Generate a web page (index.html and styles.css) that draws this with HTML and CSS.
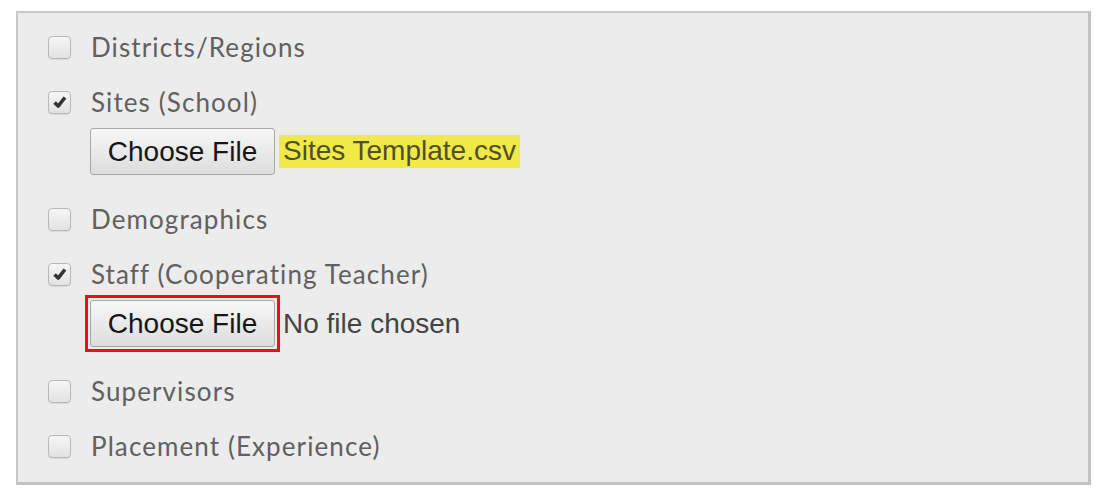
FILE: index.html
```html
<!DOCTYPE html>
<html lang="en">
<head>
  <meta charset="UTF-8">
  <title>Import</title>
  <link rel="stylesheet" href="styles.css">
</head>
<body>
  <div class="panel">
    <div class="item">
      <label class="opcion"><span class="caja"></span>Districts/Regions</label>
    </div>

    <div class="item">
      <label class="opcion"><span class="caja marcada"><svg viewBox="0 0 20 20"><path d="M4 10.5 L8 14.5 L15.5 5" /></svg></span>Sites (School)</label>
      <div class="archivo">
        <span class="boton">Choose File</span>
        <span class="nombre resaltado">Sites Template.csv</span>
      </div>
    </div>

    <div class="item">
      <label class="opcion"><span class="caja"></span>Demographics</label>
    </div>

    <div class="item">
      <label class="opcion"><span class="caja marcada"><svg viewBox="0 0 20 20"><path d="M4 10.5 L8 14.5 L15.5 5" /></svg></span>Staff (Cooperating Teacher)</label>
      <div class="archivo">
        <span class="marco"><span class="boton">Choose File</span></span>
        <span class="nombre">No file chosen</span>
      </div>
    </div>

    <div class="item">
      <label class="opcion"><span class="caja"></span>Supervisors</label>
    </div>

    <div class="item">
      <label class="opcion"><span class="caja"></span>Placement (Experience)</label>
    </div>
  </div>
</body>
</html>
```

FILE: styles.css
```css
body {
  margin: 0;
  background: #ffffff;
  font-family: 'Lato', sans-serif;
}
.panel {
  margin: 11px 0 0 16px;
  width: 1070px;
  height: 437px;
  padding: 14px 0 18px 0;
  background-color: #ececec;
  border: 2px solid #c8c8c8;
  border-right: 3px solid #c2c2c2;
  border-bottom: 3px solid #c2c2c2;
}
.item {
  padding-top: 15px;
}
.item:first-child {
  padding-top: 0;
}
.opcion {
  display: flex;
  align-items: center;
  height: 40px;
  padding-left: 30px;
  font-size: 26px;
  color: #606060;
  letter-spacing: 1.1px;
}
.caja {
  width: 21px;
  height: 21px;
  margin-right: 20px;
  border: 1px solid #b8b8b8;
  border-radius: 4px;
  background: linear-gradient(#f6f6f6, #e2e2e2);
  box-shadow: 0 1px 1px rgba(0,0,0,0.08);
  display: flex;
  align-items: center;
  justify-content: center;
}
.caja svg {
  width: 18px;
  height: 18px;
}
.caja path {
  fill: none;
  stroke: #333333;
  stroke-width: 4;
  stroke-linejoin: round;
}
.archivo {
  display: flex;
  align-items: center;
  padding: 6px 0 9px 72px;
  font-family: 'Liberation Sans', Arial, sans-serif;
  font-size: 28px;
}
.boton {
  display: inline-flex;
  align-items: center;
  justify-content: center;
  box-sizing: border-box;
  width: 185px;
  height: 47px;
  border: 1px solid #a8a8a8;
  border-radius: 3px;
  background: linear-gradient(#f7f7f7, #dddddd);
  color: #161616;
}
.marco {
  display: inline-flex;
  margin: -5px;
  padding: 2px;
  border: 3px solid #ec0f1a;
}
.nombre {
  margin-left: 8px;
  color: #444;
}
.resaltado {
  margin-left: 4px;
  padding: 0 4px 1px 4px;
  background-color: #f0ea46;
  color: #505028;
}
```
